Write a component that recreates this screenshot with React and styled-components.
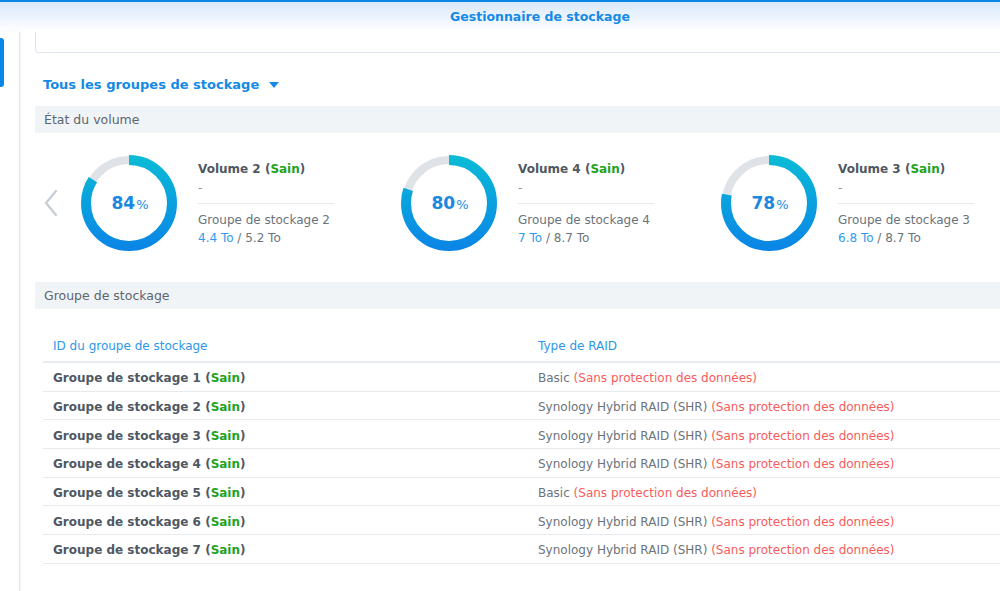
import React from "react";
import styled, { createGlobalStyle } from "styled-components";

const GlobalStyle = createGlobalStyle`
  html, body { margin: 0; padding: 0; background: #fff; overflow: hidden; }
  body { font-family: "DejaVu Sans", Verdana, sans-serif; }
  * { box-sizing: border-box; }
`;

const Window = styled.div`
  width: 1000px;
  height: 591px;
  display: flex;
  flex-direction: column;
  background: #fff;
`;

const TitleBar = styled.div`
  height: 32px;
  border-top: 2px solid #0a86e6;
  background: linear-gradient(#d8e9fa, #ffffff);
  display: flex;
  align-items: center;
  justify-content: center;
  padding-left: 80px;
  padding-bottom: 2px;
  font-weight: bold;
  font-size: 12.5px;
  color: #1589e6;
`;

const Body = styled.div`
  flex: 1;
  display: flex;
  min-height: 0;
`;

const Sidebar = styled.div`
  width: 20px;
  flex: none;
  border-right: 1px solid #e3e7eb;
  box-shadow: 1px 0 3px rgba(0, 0, 0, 0.05);
  padding-top: 6px;
`;

const Indicator = styled.div`
  width: 4px;
  height: 49px;
  background: #0a86e6;
  border-radius: 0 3px 3px 0;
`;

const Main = styled.div`
  flex: 1;
  min-width: 0;
  padding-left: 15px;
  display: flex;
  flex-direction: column;
  overflow: hidden;
`;

const TopCard = styled.div`
  height: 21px;
  border: 1px solid #dfe5ec;
  border-top: none;
  border-right: none;
  border-radius: 0 0 0 4px;
`;

const GroupSelector = styled.div`
  height: 53px;
  display: flex;
  align-items: center;
  padding-left: 8px;
  padding-top: 9px;
  gap: 10px;
  font-weight: bold;
  font-size: 13px;
  color: #1589e6;
`;

const Caret = styled.span`
  width: 0;
  height: 0;
  border-left: 5px solid transparent;
  border-right: 5px solid transparent;
  border-top: 6px solid #1589e6;
  margin-top: 2px;
`;

const SectionHeader = styled.div`
  height: 27px;
  background: #f1f4f7;
  display: flex;
  align-items: center;
  padding-left: 9px;
  font-size: 12.5px;
  color: #5c656e;
`;

const VolumeRow = styled.div`
  height: 149px;
  display: flex;
  align-items: flex-start;
  padding-left: 8px;
  padding-top: 22px;
  overflow: hidden;
`;

const Chevron = styled.div`
  width: 38px;
  height: 96px;
  flex: none;
  display: flex;
  align-items: center;
`;

const VolumeCard = styled.div`
  width: 320px;
  flex: none;
  display: flex;
  align-items: flex-start;
  gap: 21px;
`;

const DonutWrap = styled.div`
  position: relative;
  width: 96px;
  height: 96px;
  flex: none;
`;

const DonutLabel = styled.div`
  position: absolute;
  inset: 0;
  display: flex;
  align-items: center;
  justify-content: center;
  font-weight: bold;
  font-size: 17px;
  color: #1a87e2;
  padding-left: 2px;
`;

const Pct = styled.span`
  font-size: 13px;
  font-weight: normal;
  margin-left: 1px;
  margin-top: 2px;
`;

const Info = styled.div`
  width: 136px;
  padding-top: 5px;
  display: flex;
  flex-direction: column;
  font-size: 12px;
  color: #6b737b;
`;

const VolName = styled.div`
  font-weight: bold;
  color: #4f5862;
  line-height: 18px;
  white-space: nowrap;
`;

const Dash = styled.div`
  line-height: 20px;
  color: #8a9198;
  padding-bottom: 5px;
  border-bottom: 1px solid #e6e9ed;
`;

const Line = styled.div`
  line-height: 18px;
  white-space: nowrap;
  padding-top: ${(p) => (p.$first ? "7px" : "0")};
`;

const Good = styled.span`
  color: #21a321;
`;

const Used = styled.span`
  color: #2f9bef;
`;

const Warn = styled.span`
  color: #f75b5b;
`;

const TableWrap = styled.div`
  padding: 20px 0 0 8px;
`;

const Table = styled.div`
  display: flex;
  flex-direction: column;
`;

const HeadRow = styled.div`
  display: grid;
  grid-template-columns: 485px 1fr;
  height: 34px;
  align-items: center;
  border-bottom: 2px solid #e8ecf0;
  font-size: 12px;
  color: #2d97ea;
`;

const Row = styled.div`
  display: grid;
  grid-template-columns: 485px 1fr;
  height: 28.67px;
  align-items: center;
  border-bottom: 1px solid #e8ebee;
  font-size: 12px;
  color: #6b737b;
  padding-top: 2px;
`;

const Cell = styled.div`
  padding-left: 10px;
  padding-top: 1px;
  white-space: nowrap;
  font-weight: ${(p) => (p.$bold ? "bold" : "normal")};
  color: ${(p) => (p.$bold ? "#4f5862" : "inherit")};
`;

function Donut({ pct, id }) {
  const r = 43;
  const c = 2 * Math.PI * r;
  return (
    <DonutWrap>
      <svg width="96" height="96" viewBox="0 0 96 96">
        <defs>
          <linearGradient id={id} x1="96" y1="0" x2="0" y2="0" gradientUnits="userSpaceOnUse">
            <stop offset="0" stopColor="#0abcd6" />
            <stop offset="1" stopColor="#0a84e6" />
          </linearGradient>
        </defs>
        <circle cx="48" cy="48" r={r} fill="none" stroke="#dfe3e8" strokeWidth="8" />
        <circle
          cx="48"
          cy="48"
          r={r}
          fill="none"
          stroke={`url(#${id})`}
          strokeWidth="10"
          strokeDasharray={`${(c * pct) / 100} ${c}`}
          transform="rotate(-90 48 48)"
        />
      </svg>
      <DonutLabel>
        {pct}
        <Pct>%</Pct>
      </DonutLabel>
    </DonutWrap>
  );
}

const volumes = [
  { name: "Volume 2", pct: 84, group: "Groupe de stockage 2", used: "4.4 To", total: "5.2 To" },
  { name: "Volume 4", pct: 80, group: "Groupe de stockage 4", used: "7 To", total: "8.7 To" },
  { name: "Volume 3", pct: 78, group: "Groupe de stockage 3", used: "6.8 To", total: "8.7 To" },
];

const groups = [
  { n: 1, raid: "Basic" },
  { n: 2, raid: "Synology Hybrid RAID (SHR)" },
  { n: 3, raid: "Synology Hybrid RAID (SHR)" },
  { n: 4, raid: "Synology Hybrid RAID (SHR)" },
  { n: 5, raid: "Basic" },
  { n: 6, raid: "Synology Hybrid RAID (SHR)" },
  { n: 7, raid: "Synology Hybrid RAID (SHR)" },
];

export default function App() {
  return (
    <>
      <GlobalStyle />
      <Window>
        <TitleBar>Gestionnaire de stockage</TitleBar>
        <Body>
          <Sidebar>
            <Indicator />
          </Sidebar>
          <Main>
            <TopCard />
            <GroupSelector>
              Tous les groupes de stockage
              <Caret />
            </GroupSelector>
            <SectionHeader>État du volume</SectionHeader>
            <VolumeRow>
              <Chevron>
                <svg width="16" height="28" viewBox="0 0 16 28">
                  <path d="M13 2 L3 14 L13 26" fill="none" stroke="#c5ccd4" strokeWidth="2.2" strokeLinecap="round" strokeLinejoin="round" />
                </svg>
              </Chevron>
              {volumes.map((v, i) => (
                <VolumeCard key={v.name}>
                  <Donut pct={v.pct} id={`g${i}`} />
                  <Info>
                    <VolName>
                      {v.name} (<Good>Sain</Good>)
                    </VolName>
                    <Dash>-</Dash>
                    <Line $first>{v.group}</Line>
                    <Line>
                      <Used>{v.used}</Used> / {v.total}
                    </Line>
                  </Info>
                </VolumeCard>
              ))}
            </VolumeRow>
            <SectionHeader>Groupe de stockage</SectionHeader>
            <TableWrap>
              <Table>
                <HeadRow>
                  <Cell>ID du groupe de stockage</Cell>
                  <Cell>Type de RAID</Cell>
                </HeadRow>
                {groups.map((g) => (
                  <Row key={g.n}>
                    <Cell $bold>
                      Groupe de stockage {g.n} (<Good>Sain</Good>)
                    </Cell>
                    <Cell>
                      {g.raid} <Warn>(Sans protection des données)</Warn>
                    </Cell>
                  </Row>
                ))}
              </Table>
            </TableWrap>
          </Main>
        </Body>
      </Window>
    </>
  );
}
